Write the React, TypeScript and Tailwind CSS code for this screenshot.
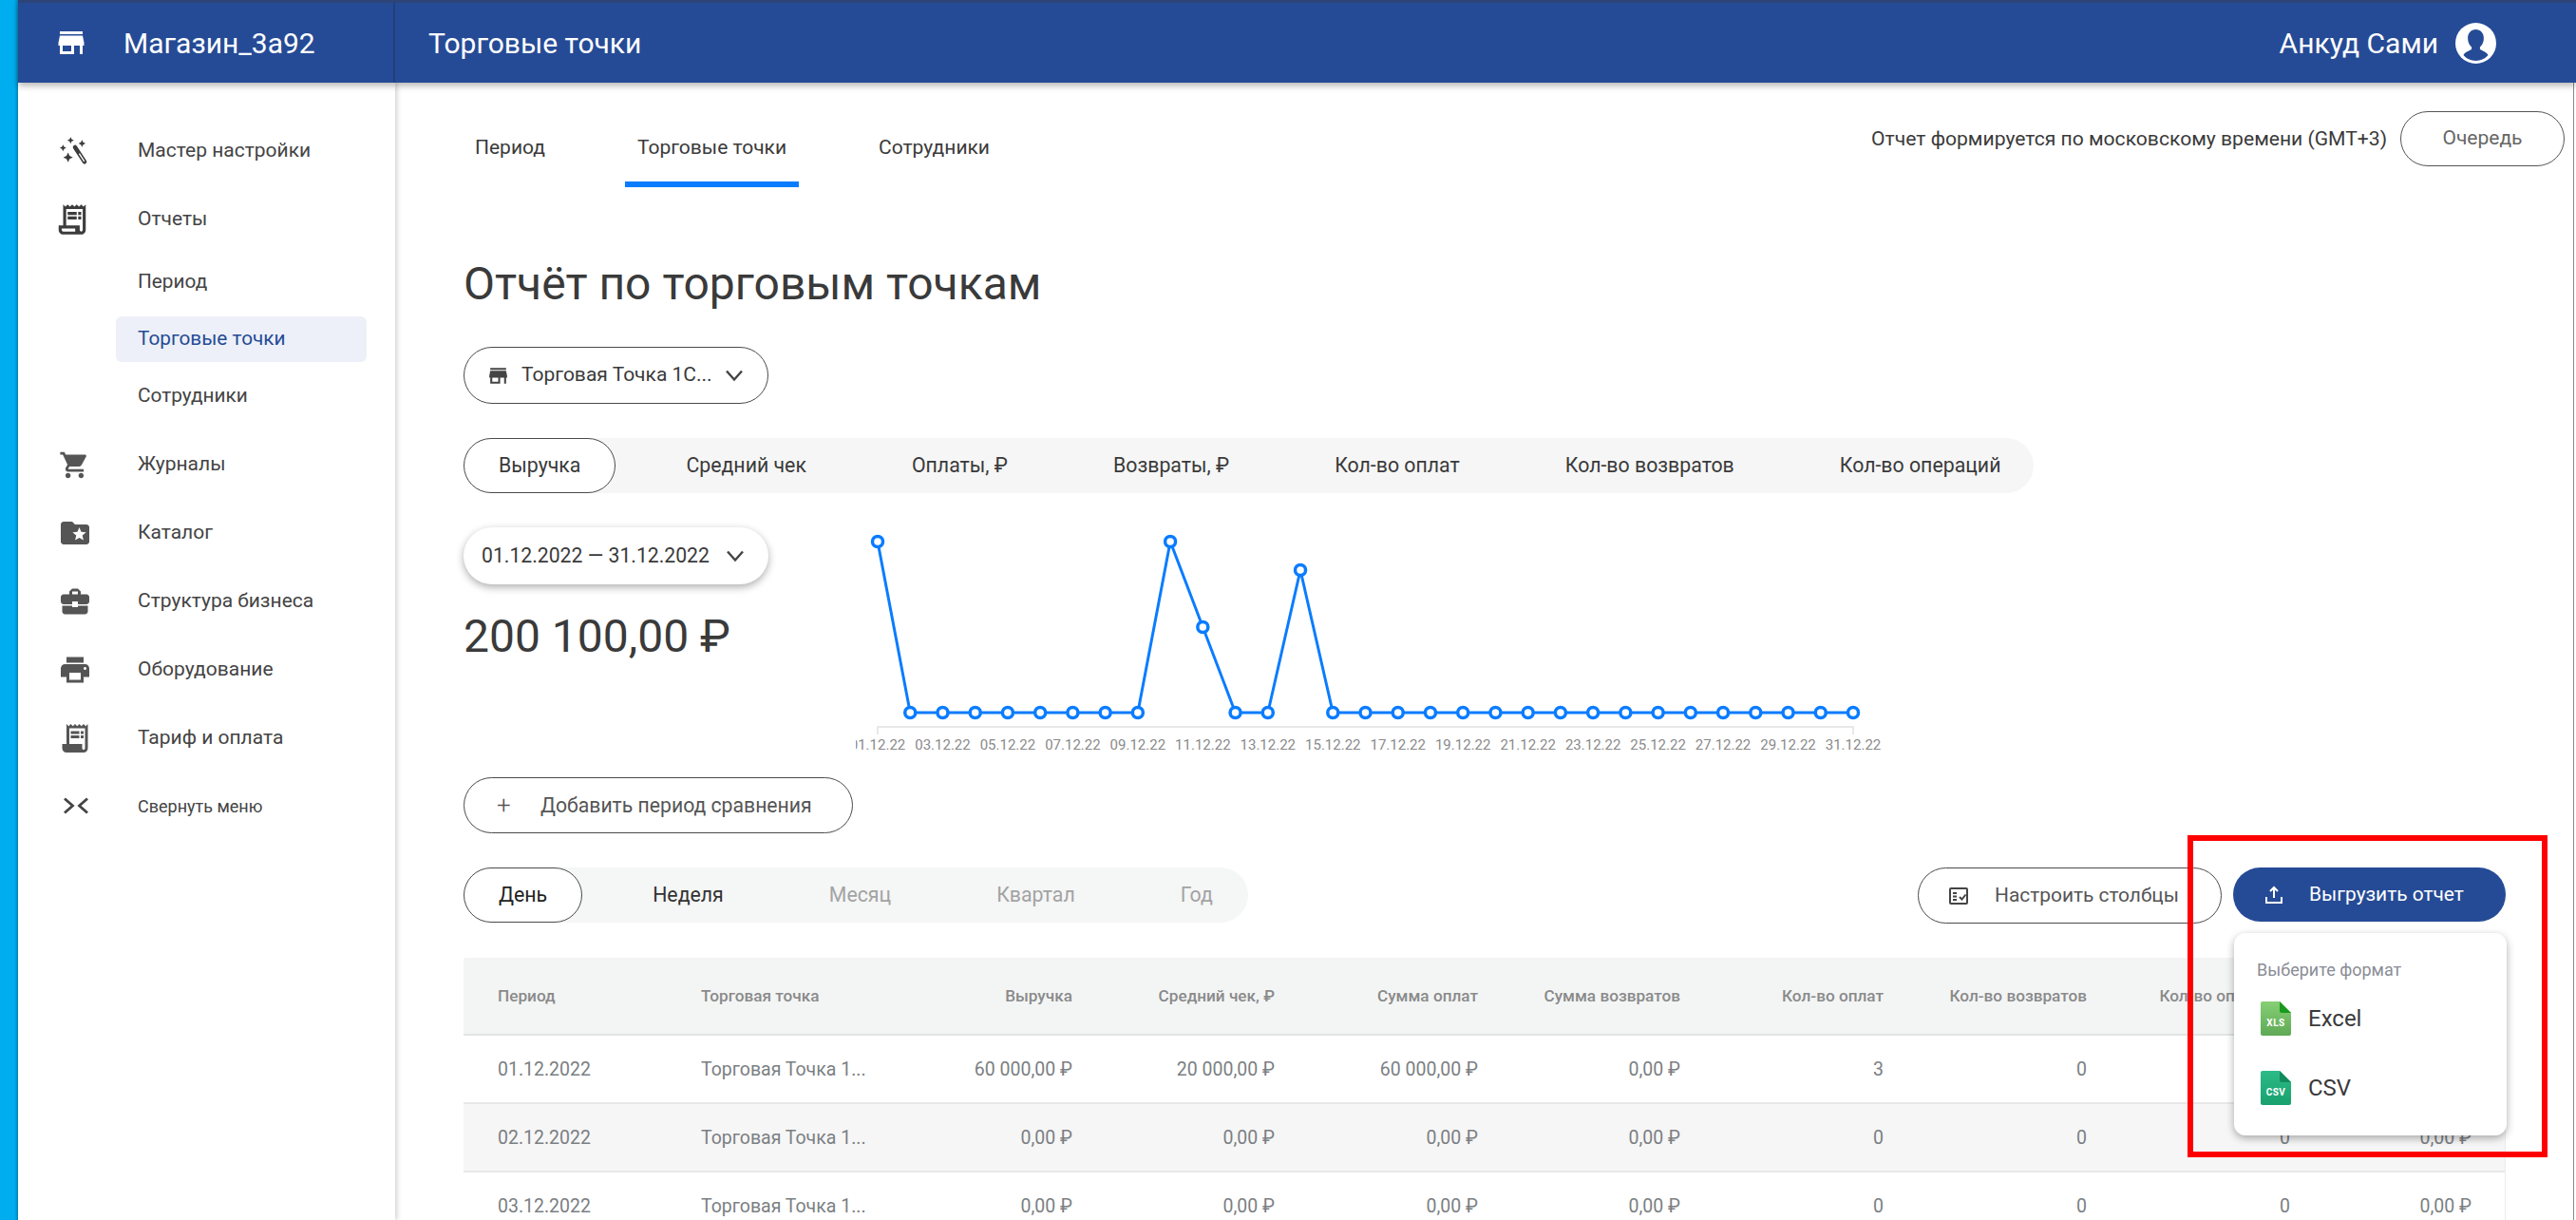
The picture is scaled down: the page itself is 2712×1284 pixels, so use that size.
import React from "react";

const P = (d: string) => <path d={d} />;
const Ic = ({ d, size = 32, color = "#555", className = "" }: { d: string; size?: number; color?: string; className?: string }) => (
  <svg width={size} height={size} viewBox="0 0 24 24" fill={color} fillRule="evenodd" className={className}>{P(d)}</svg>
);

const STORE = "M20 4H4v2h16V4zm1 10v-2l-1-5H4l-1 5v2h1v6h10v-6h4v6h2v-6h1zm-9 4H6v-4h6v4z";
const RECEIPT = "M19.5 3.5 18 2l-1.5 1.5L15 2l-1.5 1.5L12 2l-1.5 1.5L9 2 7.5 3.5 6 2v14H3v3c0 1.66 1.34 3 3 3h12c1.66 0 3-1.34 3-3V2l-1.5 1.5zM15 20H6c-.55 0-1-.45-1-1v-1h9v2zm4-1c0 .55-.45 1-1 1s-1-.45-1-1v-3H8V5h11v14zM9 7h6v2H9zm7 0h2v2h-2zm-7 3h6v2H9zm7 0h2v2h-2z";
const RECEIPT_FILLED = "M19.5 3.5 18 2l-1.5 1.5L15 2l-1.5 1.5L12 2l-1.5 1.5L9 2 7.5 3.5 6 2v14H3v3c0 1.66 1.34 3 3 3h12c1.66 0 3-1.34 3-3V2l-1.5 1.5zM19 19c0 .55-.45 1-1 1s-1-.45-1-1v-3H8V5h11v14zM9 7h6v2H9zm7 0h2v2h-2zm-7 3h6v2H9zm7 0h2v2h-2z";
const CART = "M7 18c-1.1 0-1.99.9-1.99 2S5.9 22 7 22s2-.9 2-2-.9-2-2-2zM1 2v2h2l3.6 7.59-1.35 2.45c-.16.28-.25.61-.25.96 0 1.1.9 2 2 2h12v-2H7.42c-.14 0-.25-.11-.25-.25l.03-.12.9-1.63h7.45c.75 0 1.41-.41 1.75-1.03l3.58-6.49c.08-.14.12-.31.12-.48 0-.55-.45-1-1-1H5.21l-.94-2H1zm16 16c-1.1 0-1.99.9-1.99 2s.89 2 1.99 2 2-.9 2-2-.9-2-2-2z";
const FOLDER = "M20 6h-8l-2-2H4c-1.1 0-1.99.9-1.99 2L2 18c0 1.1.9 2 2 2h16c1.1 0 2-.9 2-2V8c0-1.1-.9-2-2-2zm-2.06 11L15 15.28 12.06 17l.78-3.33-2.59-2.24 3.41-.29L15 8l1.34 3.14 3.41.29-2.59 2.24.78 3.33z";
const CASE = "M10 16v-1H3.01L3 19c0 1.11.89 2 2 2h14c1.11 0 2-.89 2-2v-4h-7v1h-4zm10-9h-4.01V5l-2-2h-4l-2 2v2H4c-1.1 0-2 .9-2 2v3c0 1.11.89 2 2 2h6v-2h4v2h6c1.1 0 2-.9 2-2V9c0-1.1-.9-2-2-2zm-6 0h-4V5h4v2z";
const PRINT = "M19 8H5c-1.66 0-3 1.34-3 3v6h4v4h12v-4h4v-6c0-1.66-1.34-3-3-3zm-3 11H8v-5h8v5zm3-7c-.55 0-1-.45-1-1s.45-1 1-1 1 .45 1 1-.45 1-1 1zm-1-9H6v4h12V3z";

const star = (x: number, y: number, r: number) => {
  const k = r * 0.32;
  return `M${x} ${y - r}L${x + k} ${y - k}L${x + r} ${y}L${x + k} ${y + k}L${x} ${y + r}L${x - k} ${y + k}L${x - r} ${y}L${x - k} ${y - k}Z`;
};

const Wand = () => (
  <svg width="32" height="32" viewBox="0 0 24 24" fill="#3c3c3c">
    <path d={star(10, 3.5, 2.6)} />
    <path d={star(19, 6, 2.8)} />
    <path d={star(4, 9.5, 2.6)} />
    <path d={star(8, 17, 3.800)} />
    <path d="M13.500 9 21 20.500" stroke="#3c3c3c" strokeWidth="3.4" strokeLinecap="round" fill="none" />
    <path d="M16.800 14 20.800 20.200" stroke="#fff" strokeWidth="1" fill="none" />
  </svg>
);

const Collapse = () => (
  <svg width="26" height="18" viewBox="0 0 26 18" fill="none" stroke="#444" strokeWidth="2.800">
    <path d="M1 1.500 9.500 9 1 16.500M25 1.500 16.500 9 25 16.500" />
  </svg>
);

const Chevron = () => (
  <svg width="20" height="20" viewBox="0 0 20 20" fill="none" stroke="#444" strokeWidth="2.4" className="shrink-0">
    <path d="M2 5.500 10 14.500 18 5.500" />
  </svg>
);

const Avatar = () => (
  <svg width="43" height="43" viewBox="0 0 43 43">
    <circle cx="21.5" cy="21.5" r="21.5" fill="#fff" />
    <path d="M21.5 7c-5.2 0-8.4 4-8.4 9.2 0 3.7 1.5 7.2 4 9.2v2.4c-2.6 2-6.8 2.6-8.6 6.2 3 3.6 7.8 5.9 13 5.9s10-2.3 13-5.9c-1.8-3.6-6-4.200-8.600-6.200v-2.400c2.500-2 4-5.500 4-9.200C29.900 11 26.700 7 21.500 7z" fill="#264b96" />
  </svg>
);

const FileIcon = ({ label, top, bottom, fold }: { label: string; top: string; bottom: string; fold: string }) => {
  const id = "grad" + label;
  return (
    <svg width="32" height="36" viewBox="0 0 32 36" className="shrink-0">
      <defs>
        <linearGradient id={id} x1="0" y1="0" x2="0" y2="1">
          <stop offset="0" stopColor={top} />
          <stop offset="1" stopColor={bottom} />
        </linearGradient>
      </defs>
      <path d="M2 0h18l12 12v22a2 2 0 0 1-2 2H2a2 2 0 0 1-2-2V2a2 2 0 0 1 2-2z" fill={`url(#${id})`} />
      <path d="M20 0l12 12H22a2 2 0 0 1-2-2z" fill={fold} />
      <text x="16" y="26" textAnchor="middle" fontSize="10" fontWeight="700" fill="#fff" fontFamily="Roboto, sans-serif" letterSpacing="0.5">{label}</text>
    </svg>
  );
};

const mainNav: [React.ReactNode, string][] = [
  [<Ic d={CART} size={33} className="ml-[1px]" />, "Журналы"],
  [<Ic d={FOLDER} size={36} />, "Каталог"],
  [<Ic d={CASE} size={36} />, "Структура бизнеса"],
  [<Ic d={PRINT} size={36} />, "Оборудование"],
  [<Ic d={RECEIPT_FILLED} size={36} />, "Тариф и оплата"],
];

const Sidebar = () => (
  <aside className="relative z-10 w-[397px] shrink-0 bg-white shadow-[2px_0_5px_rgba(0,0,0,0.18)] pt-[36px] text-[#444] text-[20.8px]">
    <div className="h-[72px] flex items-center pl-[42px]">
      <span className="w-[84px] flex"><Wand /></span>
      <span className="font-[450] text-[21px]">Мастер настройки</span>
    </div>
    <div className="h-[72px] flex items-center pl-[42px]">
      <span className="w-[84px] flex"><Ic d={RECEIPT} size={38} color="#3c3c3c" className="-ml-[4px]" /></span>
      <span className="font-[450] text-[21px]">Отчеты</span>
    </div>
    <div className="h-[60px] flex items-center pl-[126px]">Период</div>
    <div className="h-[60px] flex items-center">
      <div className="ml-[103px] w-[264px] h-[48px] rounded-[6px] bg-[#edf0f8] text-[#264b96] flex items-center pl-[23px]">Торговые точки</div>
    </div>
    <div className="h-[60px] flex items-center pl-[126px] mb-[6px]">Сотрудники</div>
    {mainNav.map(([icon, label]) => (
      <div key={label} className="h-[72px] flex items-center pl-[42px]">
        <span className="w-[84px] flex">{icon}</span>
        <span className="font-[450] text-[21px]">{label}</span>
      </div>
    ))}
    <div className="h-[70px] flex items-center pl-[42px]">
      <span className="w-[84px] flex pl-[6px]"><Collapse /></span>
      <span className="text-[18px]">Свернуть меню</span>
    </div>
  </aside>
);

const tabs = ["Средний чек", "Оплаты, ₽", "Возвраты, ₽", "Кол-во оплат", "Кол-во возвратов", "Кол-во операций"];

const points = [570, 750, 750, 750, 750, 750, 750, 750, 750, 570, 660, 750, 750, 600, 750, 750, 750, 750, 750, 750, 750, 750, 750, 750, 750, 750, 750, 750, 750, 750, 750];
const ox = 901;
const oy = 555;
const X = (i: number) => 924 + (i * 1027) / 30 - ox;
const labels = ["01", "03", "05", "07", "09", "11", "13", "15", "17", "19", "21", "23", "25", "27", "29", "31"];

const Chart = () => (
  <svg width="1090" height="245" viewBox="0 0 1090 245" className="shrink-0">
    <path d={`M${X(0)} 218V210H${X(30)}V218`} fill="none" stroke="#e8e8e8" strokeWidth="2" />
    <polyline points={points.map((y, i) => `${X(i)},${y - oy}`).join(" ")} fill="none" stroke="#0a7cff" strokeWidth="3" />
    {points.map((y, i) => (
      <circle key={i} cx={X(i)} cy={y - oy} r="5.500" fill="#fff" stroke="#0a7cff" strokeWidth="3.500" />
    ))}
    {labels.map((l, i) => (
      <text key={l} x={X(i * 2)} y="234" textAnchor="middle" fontSize="15" fill="#8a8a8a" fontFamily="Roboto, sans-serif">{l}.12.22</text>
    ))}
  </svg>
);

const COLS = "grid grid-cols-[214px_249px_214px_213px_214px_213px_214px_214px_214px_191px] items-center";
const headers = ["Период", "Торговая точка", "Выручка", "Средний чек, ₽", "Сумма оплат", "Сумма возвратов", "Кол-во оплат", "Кол-во возвратов", "Кол-во операций", "Средний"];
const rows = [
  ["01.12.2022", "Торговая Точка 1...", "60 000,00 ₽", "20 000,00 ₽", "60 000,00 ₽", "0,00 ₽", "3", "0", "0", "0,00 ₽"],
  ["02.12.2022", "Торговая Точка 1...", "0,00 ₽", "0,00 ₽", "0,00 ₽", "0,00 ₽", "0", "0", "0", "0,00 ₽"],
  ["03.12.2022", "Торговая Точка 1...", "0,00 ₽", "0,00 ₽", "0,00 ₽", "0,00 ₽", "0", "0", "0", "0,00 ₽"],
];

const cell = (i: number) => (i < 2 ? "pl-[36px] truncate" : "pr-[36px] text-right whitespace-nowrap");

const Table = () => (
  <div className="mt-[36px] border-r border-[#ececec] overflow-hidden">
    <div className={`${COLS} h-[82px] pt-[2px] bg-[#f3f5f5] border-b-2 border-[#e2e4e4] text-[17.2px] font-medium text-[#8a8a8a] rounded-t-[3px]`}>
      {headers.map((h, i) => <div key={h} className={cell(i)}>{h}</div>)}
    </div>
    {rows.map((r, ri) => (
      <div key={ri} className={`${COLS} h-[72px] pt-[2px] border-b-2 border-[#e8e8e8] text-[19.5px] text-[#7b7f83] ${ri === 1 ? "bg-[#f6f6f6]" : "bg-white"}`}>
        {r.map((c, i) => <div key={i} className={cell(i)}>{c}</div>)}
      </div>
    ))}
  </div>
);

const Dropdown = () => (
  <div className="absolute left-[1px] top-[69px] z-20 w-[287px] h-[213px] bg-white rounded-[12px] shadow-[0_3px_9px_rgba(0,0,0,0.32)] pt-[26px] px-[24px]">
    <div className="text-[18px] leading-[26px] text-[#8a8d96]">Выберите формат</div>
    <div className="h-[36px] mt-[20px] flex items-center pl-[4px]">
      <FileIcon label="XLS" top="#86cf74" bottom="#5fa956" fold="#189a1c" />
      <span className="ml-[18px] text-[24px] text-[#3a3a3a]">Excel</span>
    </div>
    <div className="h-[36px] mt-[37px] flex items-center pl-[4px]">
      <FileIcon label="CSV" top="#2cbb88" bottom="#18a06e" fold="#118a5c" />
      <span className="ml-[18px] text-[24px] text-[#3a3a3a]">CSV</span>
    </div>
  </div>
);

export default function App() {
  return (
    <div className="relative h-[1284px] w-[2712px] overflow-hidden bg-white font-['Roboto',sans-serif] flex">
      <div className="w-[19px] shrink-0 bg-gradient-to-r from-[#00aeef] from-[80%] to-[#0089bd]" />
      <div className="flex-1 flex flex-col min-w-0">
        <header className="relative z-20 h-[87px] shrink-0 bg-[#264b96] border-t-[3px] border-[#2c4478] shadow-[0_3px_7px_rgba(0,0,0,0.3)] flex items-center text-white">
          <div className="w-[397px] h-full flex items-center border-r-2 border-[#213f80] pl-[38px]">
            <Ic d={STORE} size={36} color="#fff" />
            <span className="ml-[37px] text-[30px]">Магазин_3а92</span>
          </div>
          <span className="ml-[35px] text-[30px]">Торговые точки</span>
          <div className="ml-auto mr-[84px] flex items-center">
            <span className="text-[30px]">Анкуд Сами</span>
            <span className="ml-[18px] flex"><Avatar /></span>
          </div>
        </header>
        <div className="flex-1 flex min-h-0">
          <Sidebar />
          <main className="flex-1 min-w-0 mr-[2px] border-r border-[#8a8a8a] pl-[72px] pr-[9px] text-[#3a3a3a]">
            <div className="h-[110px] flex justify-between">
              <nav className="flex gap-[71px] pt-[30px] -ml-[1px] text-[21px] font-[450]">
                <div className="h-[80px] px-[13px] pt-[23px]">Период</div>
                <div className="h-[80px] px-[13px] pt-[23px] border-b-[6px] border-[#0a7cff]">Торговые точки</div>
                <div className="h-[80px] px-[13px] pt-[23px]">Сотрудники</div>
              </nav>
              <div className="h-[58px] mt-[30px] flex items-center text-[21px]">
                <span className="font-[450] text-[21.100px]">Отчет формируется по московскому времени (GMT+3)</span>
                <button className="ml-[14px] w-[173px] h-[58px] rounded-full border border-[#555] text-[#666]">Очередь</button>
              </div>
            </div>
            <div className="pr-[62px]">
              <h1 className="mt-[74px] h-[56px] leading-[56px] text-[48px] font-normal">Отчёт по торговым точкам</h1>
              <button className="mt-[38px] w-[321px] h-[60px] rounded-full border-[1.5px] border-[#4a4a4a] flex items-center pl-[23px] pr-[25px] text-[21px] font-[450]">
                <Ic d={STORE} size={25} color="#444" />
                <span className="ml-[12px] whitespace-nowrap">Торговая Точка 1С...</span>
                <span className="ml-auto flex"><Chevron /></span>
              </button>
              <div className="mt-[36px] h-[58px] w-[1653px] rounded-full bg-[#f6f6f6] flex gap-[37px] items-center text-[21.300px] font-[450]">
                <div className="h-[58px] rounded-full border-[1.5px] border-[#4a4a4a] bg-white px-[36px] flex items-center">Выручка</div>
                {tabs.map((t) => <div key={t} className="px-[37px] whitespace-nowrap">{t}</div>)}
              </div>
              <div className="mt-[36px] h-[263px] flex gap-[92px]">
                <div className="w-[321px] shrink-0">
                  <button className="w-[321px] h-[60px] rounded-full bg-white shadow-[0_3px_9px_rgba(0,0,0,0.32)] flex items-center pl-[19px] pr-[25px] text-[21.2px] whitespace-nowrap">
                    <span>01.12.2022 — 31.12.2022</span>
                    <span className="ml-auto flex"><Chevron /></span>
                  </button>
                  <div className="mt-[25px] h-[60px] leading-[60px] text-[48px]">200 100,00 ₽</div>
                </div>
                <Chart />
              </div>
              <button className="w-[410px] h-[59px] rounded-full border-[1.5px] border-[#4a4a4a] flex items-center pl-[34px] text-[21.2px] text-[#555]">
                <span className="w-[46px] text-left text-[26px] font-light">+</span>
                <span>Добавить период сравнения</span>
              </button>
              <div className="mt-[36px] h-[59px] flex items-start justify-between">
                <div className="h-[58px] w-[826px] rounded-full bg-[#f5f6f6] flex gap-[37px] items-center text-[21.300px] font-[450] text-[#a3a3a3]">
                  <div className="h-[58px] rounded-full border-[1.5px] border-[#4a4a4a] bg-white px-[36px] flex items-center text-[#222]">День</div>
                  <div className="px-[37px] text-[#333]">Неделя</div>
                  <div className="px-[37px]">Месяц</div>
                  <div className="px-[37px]">Квартал</div>
                  <div className="px-[37px]">Год</div>
                </div>
                <div className="flex gap-[12px]">
                  <button className="w-[320px] h-[59px] rounded-full border-[1.5px] border-[#4a4a4a] flex items-center pl-[30px] text-[20.900px] text-[#555]">
                    <svg width="24" height="24" viewBox="0 0 24 24" fill="none" stroke="#444" strokeWidth="2">
                      <rect x="3" y="4" width="18" height="16" rx="1" />
                      <path d="M6 9h4M6 12.500h4M6 16h4M13 13l2.500 2.500 4-5" />
                    </svg>
                    <span className="ml-[26px]">Настроить столбцы</span>
                  </button>
                  <div className="relative">
                    <button className="w-[287px] h-[57px] rounded-full bg-[#264b96] text-white flex items-center pl-[31px] text-[20.900px] font-[450]">
                      <svg width="24" height="24" viewBox="0 0 24 24" fill="none" stroke="#fff" strokeWidth="2">
                        <path d="M12 15V4M8 8l4-4 4 4M4 14v6h16v-6" />
                      </svg>
                      <span className="ml-[25px]">Выгрузить отчет</span>
                    </button>
                    <Dropdown />
                  </div>
                </div>
              </div>
              <Table />
            </div>
          </main>
        </div>
      </div>
      <div className="absolute left-[2303px] top-[879px] z-30 w-[379px] h-[339px] border-[6px] border-[#ff0000] pointer-events-none" />
    </div>
  );
}
